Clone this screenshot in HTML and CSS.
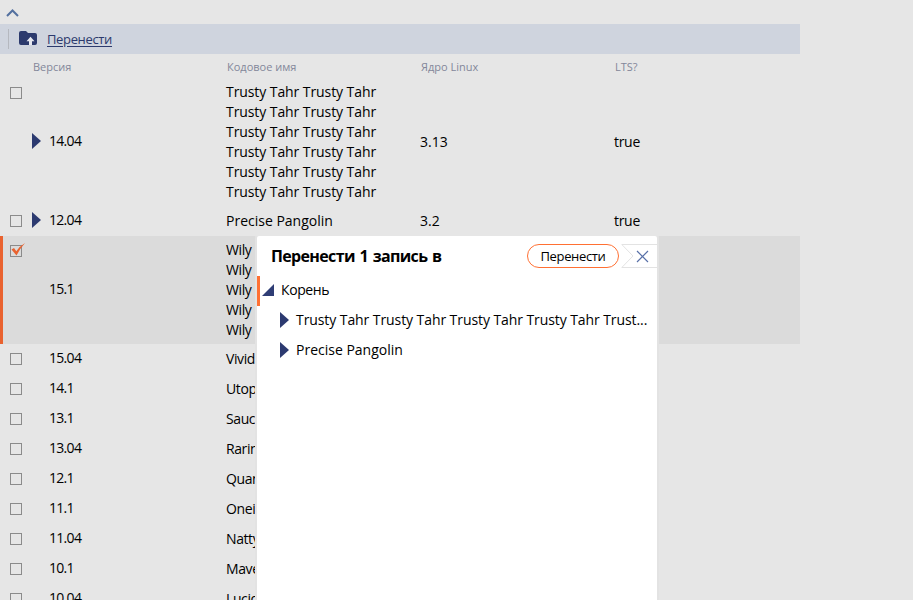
FILE: index.html
```html
<!DOCTYPE html>
<html lang="ru">
<head>
<meta charset="utf-8">
<title>Перенести</title>
<link rel="stylesheet" href="styles.css">
</head>
<body>
<main class="page">
  <div class="topbar"><svg class="up" width="13" height="8" viewBox="0 0 13 8"><path d="M1 7 6.500 1.500 12 7" fill="none" stroke="#53709f" stroke-width="2"/></svg></div>
  <div class="toolbar">
    <span class="sep"></span>
    <svg class="folder" width="18" height="14" viewBox="0 0 18 14"><path fill="#2c3a6d" d="M2 0h5l2 2h7a2 2 0 0 1 2 2v8a2 2 0 0 1-2 2H2a2 2 0 0 1-2-2V2a2 2 0 0 1 2-2z"/><path fill="#e6e8ef" d="m11.500 5.700 4 4.600H13V14h-3v-3.700H7.500z"/></svg>
    <a class="move">Перенести</a>
  </div>
  <div class="row head"><span></span><span>Версия</span><span>Кодовое имя</span><span>Ядро Linux</span><span>LTS?</span></div>
  <div class="row"><i class="check"></i><span class="version"><i class="arrow"></i>14.04</span><span class="name">Trusty Tahr Trusty Tahr<br>Trusty Tahr Trusty Tahr<br>Trusty Tahr Trusty Tahr<br>Trusty Tahr Trusty Tahr<br>Trusty Tahr Trusty Tahr<br>Trusty Tahr Trusty Tahr</span><span class="num">3.13</span><span class="lts">true</span></div>
  <div class="row"><i class="check"></i><span class="version"><i class="arrow"></i>12.04</span><span class="name wide">Precise Pangolin</span><span class="num">3.2</span><span class="lts">true</span></div>
  <div class="row selected"><i class="check"><svg class="tick" width="15" height="13" viewBox="0 0 15 13"><path fill="#e9622f" d="M.5 6.500 3 5 5.300 8.300Q8.500 3.200 14 0 9 5.500 5.500 12.600z"/></svg></i><span class="version">15.1</span><span class="name short">Wily<br>Wily<br>Wily<br>Wily<br>Wily</span></div>
  <div class="row"><i class="check"></i><span class="version">15.04</span><span class="name short">Vivid</span></div>
  <div class="row"><i class="check"></i><span class="version">14.1</span><span class="name short">Utop</span></div>
  <div class="row"><i class="check"></i><span class="version">13.1</span><span class="name short">Sauc</span></div>
  <div class="row"><i class="check"></i><span class="version">13.04</span><span class="name short">Rarin</span></div>
  <div class="row"><i class="check"></i><span class="version">12.1</span><span class="name short">Quan</span></div>
  <div class="row"><i class="check"></i><span class="version">11.1</span><span class="name short">Onei</span></div>
  <div class="row"><i class="check"></i><span class="version">11.04</span><span class="name short">Natty</span></div>
  <div class="row"><i class="check"></i><span class="version">10.1</span><span class="name short">Mave</span></div>
  <div class="row"><i class="check"></i><span class="version">10.04</span><span class="name short">Lucid</span></div>
</main>
<section class="dialog">
  <header class="dialog-head">
    <h1>Перенести 1 запись в</h1>
    <button class="submit">Перенести</button>
    <svg class="close" width="36" height="24" viewBox="0 0 36 24"><path d="M36 .5H.8L12 12 .8 23.500H36" fill="none" stroke="#e3e3e3"/><path d="m16 7 11 11m0-11-11 11" fill="none" stroke="#5870a8" stroke-width="1.200"/></svg>
  </header>
  <div class="node root"><svg class="open" width="12" height="12" viewBox="0 0 12 12"><path fill="#2f3d75" d="M0 12 12 0v12z"/></svg><span class="label">Корень</span></div>
  <div class="node"><i class="arrow"></i><span class="label long">Trusty Tahr Trusty Tahr Trusty Tahr Trusty Tahr Trust...</span></div>
  <div class="node"><i class="arrow"></i><span class="label">Precise Pangolin</span></div>
</section>
</body>
</html>
```
FILE: styles.css
```css
* { box-sizing: border-box; }
body {
  margin: 0;
  height: 600px;
  overflow: hidden;
  background: #e6e6e6;
  color: #000;
  font: 14px/20px "Open Sans", "Noto Sans", sans-serif;
}
.page { width: 800px; height: 600px; overflow: hidden; }
.topbar { height: 24px; padding: 9px 6px; }
svg { display: block; flex: none; }
.toolbar { height: 30px; display: flex; align-items: center; padding-left: 8px; background: #cfd4de; }
.sep { width: 1px; height: 20px; margin-right: 10px; background: #b5b8bf; }
.folder { margin-top: -2px; }
.move {
  margin-left: 10px;
  color: #2c3a6d;
  font-size: 13px;
  letter-spacing: -.35px;
  text-decoration: underline;
  text-underline-offset: 2px;
}
.row {
  display: grid;
  grid-template-columns: 33px 193px 194px 194px 1fr;
  align-items: center;
  min-height: 30px;
  padding: 4px 0;
}
.head { min-height: 24px; height: 24px; padding: 2px 0 0; color: #83879a; font-size: 11px; }
.head span:nth-child(n+3) { padding-left: 1px; }
.name { letter-spacing: -.08px; }
.wide { letter-spacing: 0; }
.short { letter-spacing: -.4px; }
.lts { letter-spacing: -.3px; }
.selected { background: #dbdbdb; box-shadow: inset 3px 0 #e9622f; }
.check { align-self: start; width: 12px; height: 12px; margin: 5px 0 0 10px; border: 1px solid #8b8b8b; }
.tick { margin: -3px 0 0; }
.version { position: relative; top: -1px; padding-left: 16px; letter-spacing: -.7px; }
.arrow { width: 9px; height: 16px; flex: none; background: #2c3a70; clip-path: polygon(0 0, 100% 50%, 0 100%); }
.version .arrow { position: absolute; left: -1px; top: 2px; }
.dialog {
  position: absolute;
  left: 257px;
  top: 236px;
  width: 400px;
  height: 364px;
  background: #fff;
  border-radius: 2px 2px 0 0;
  box-shadow: 0 0 0 2px #e3e3e3;
  clip-path: inset(0 -2px 0 -2px);
}
.dialog-head { height: 40px; display: flex; align-items: center; padding-left: 14px; }
h1 { flex: 1; margin: 0; font-size: 16px; line-height: 20px; letter-spacing: -.65px; word-spacing: 1.2px; white-space: nowrap; }
.submit {
  width: 92px;
  height: 24px;
  padding: 0;
  border: 1px solid #ff7033;
  border-radius: 12px;
  background: #fff;
  color: #000;
  font: 13px/20px "Open Sans", sans-serif;
  letter-spacing: -.35px;
}
.close { margin-left: 2px; }
.node { height: 30px; display: flex; align-items: center; padding-left: 23px; white-space: nowrap; }
.node .arrow { margin: -2px 7px 0 0; }
.label { padding-bottom: 2px; }
.long { letter-spacing: -.08px; }
.root { padding-left: 5px; box-shadow: inset 3px 0 #ff7033; }
.root .label { letter-spacing: -.4px; }
.open { margin: -3px 7px 0 0; }
```
